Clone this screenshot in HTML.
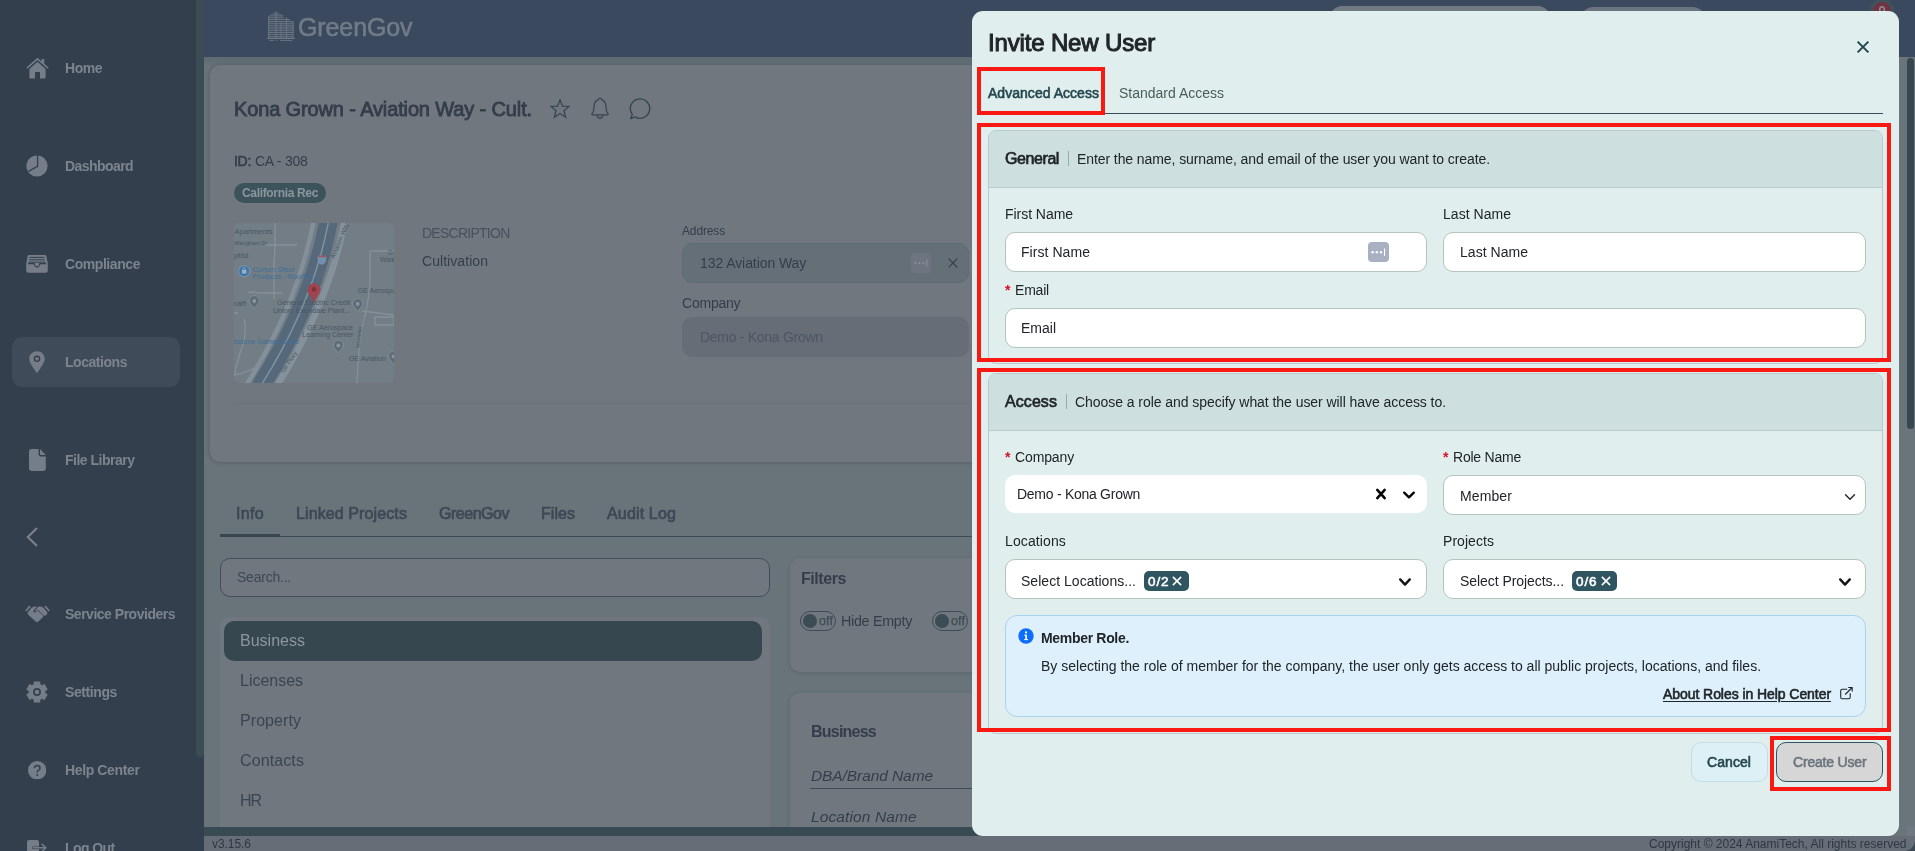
<!DOCTYPE html><html><head><meta charset="utf-8"><title>GreenGov</title><style>
html,body{margin:0;padding:0;}html{width:1915px;height:851px;overflow:hidden;}body{width:1915px;height:851px;overflow:hidden;position:relative;background:#68737a;font-family:"Liberation Sans", sans-serif;}
#w{position:absolute;left:0;top:0;width:1915px;height:851px;overflow:hidden;}#w>div,#w>span,#w>svg{position:absolute;box-sizing:border-box;}span.t{white-space:nowrap;display:block;will-change:transform;}
</style></head><body><div id="w">
<div style="left:0px;top:0px;width:196px;height:851px;background:#343f4d;"></div>
<div style="left:196px;top:0px;width:8px;height:851px;background:#343f4d;"></div>
<div style="left:196px;top:0px;width:8px;height:757px;background:#3b4c54;border-radius:0 0 4px 4px;"></div>
<div style="left:204px;top:57px;width:1711px;height:9px;background:transparent;background:linear-gradient(#5f6971,#68737a);"></div>
<div style="left:204px;top:0px;width:1711px;height:57px;background:#3a495d;"></div>
<div style="left:12px;top:337px;width:168px;height:50px;background:#404b5a;border-radius:10px;"></div>
<svg style="left:25.5px;top:57px;" width="23" height="22" viewBox="0 0 23 22"><path fill="#747d88" d="M11.5 0.8 L15.6 4.4 V2 H18.2 V6.7 L22.6 10.6 L21.6 11.8 L11.5 3 L1.4 11.8 L0.4 10.6 Z"/><path fill="#747d88" d="M11.5 4.8 L19.6 11.9 V20.6 Q19.6 21.6 18.6 21.6 H14 V15 H9 V21.6 H4.4 Q3.4 21.6 3.4 20.6 V11.9 Z"/></svg>
<svg style="left:26px;top:155px;" width="22" height="22" viewBox="0 0 22 22"><circle cx="11" cy="11" r="10.6" fill="#747d88"/><path d="M11.6 0 V11.4 L2.4 16.4" stroke="#343f4d" stroke-width="1.3" fill="none"/></svg>
<svg style="left:26px;top:254px;" width="22" height="20" viewBox="0 0 22 20"><path fill="#747d88" d="M3.2 1 H18.8 Q20 1 20.4 2.2 L21.8 9.5 V16.8 Q21.8 18.8 19.8 18.8 H2.2 Q0.2 18.8 0.2 16.8 V9.5 L1.6 2.2 Q2 1 3.2 1 Z"/><path d="M3.6 3.4 H18.4 M3.2 5.8 H18.8 M2.8 8.2 H19.2" stroke="#343f4d" stroke-width="1" fill="none"/><path d="M2 9.6 H8.2 Q8.8 12.8 11 12.8 Q13.2 12.8 13.8 9.6 H20 " stroke="#343f4d" stroke-width="1.2" fill="none"/><rect x="9" y="9" width="4" height="2.6" fill="#747d88"/></svg>
<svg style="left:29px;top:351px;" width="16" height="22" viewBox="0 0 16 22"><path fill="#747d88" d="M8 0.3 C3.6 0.3 0.3 3.6 0.3 7.8 C0.3 11 2 13.4 7.2 21.2 Q8 22.2 8.8 21.2 C14 13.4 15.7 11 15.7 7.8 C15.7 3.6 12.4 0.3 8 0.3 Z"/><circle cx="8" cy="7.8" r="2.6" fill="none" stroke="#343f4d" stroke-width="1.4"/></svg>
<svg style="left:28.5px;top:449px;" width="17" height="22" viewBox="0 0 17 22"><path fill="#747d88" d="M2.4 0 H9.6 V5.6 Q9.6 7.4 11.4 7.4 H16.8 V19.6 Q16.8 22 14.4 22 H2.4 Q0 22 0 19.6 V2.4 Q0 0 2.4 0 Z M11 0 L16.8 6 H11.6 Q11 6 11 5.4 Z"/></svg>
<svg style="left:26px;top:527px;" width="13" height="20" viewBox="0 0 13 20"><path d="M11 1 L1.8 10 L11 19" stroke="#7b848e" stroke-width="2" fill="none"/></svg>
<svg style="left:24.5px;top:605px;" width="25" height="18" viewBox="0 0 25 18"><path fill="#747d88" d="M4.2 0.6 L5.6 1.8 L1.4 6.6 L0.2 5.4 Z M20.8 0.6 L24.8 5.4 L23.6 6.6 L19.4 1.8 Z"/><path fill="#747d88" d="M6.8 2.6 L9.4 1.4 H12 L8.4 5.8 Q8 7.4 9.4 7.6 Q10.6 7.6 12.4 5.4 L18 10.2 Q18.8 11.4 17.6 12.4 L13.4 16.6 Q12 17.6 10.6 16.6 L3 9.6 L2.6 7.6 Z"/><path fill="#747d88" d="M13.2 1.4 H15.6 L18.2 2.6 L22.4 7.6 L21.8 9.8 L19.4 11 L12.6 4.8 L11.4 6 Q10.2 6.8 9.6 6.2 Z"/></svg>
<svg style="left:26px;top:681px;" width="22" height="22" viewBox="0 0 22 22"><path fill="#747d88" stroke="#747d88" stroke-width="1.4" stroke-linejoin="round" d="M8.36 1.15 L13.64 1.15 L13.52 3.51 L16.22 5.07 L18.21 3.79 L20.85 8.36 L18.74 9.44 L18.74 12.56 L20.85 13.64 L18.21 18.21 L16.22 16.93 L13.52 18.49 L13.64 20.85 L8.36 20.85 L8.48 18.49 L5.78 16.93 L3.79 18.21 L1.15 13.64 L3.26 12.56 L3.26 9.44 L1.15 8.36 L3.79 3.79 L5.78 5.07 L8.48 3.51 Z"/><circle cx="11" cy="11" r="3.1" fill="none" stroke="#343f4d" stroke-width="1.7"/></svg>
<svg style="left:27.8px;top:760.8px;" width="18.4" height="18.4" viewBox="0 0 18.4 18.4"><circle cx="9.2" cy="9.2" r="9.2" fill="#747d88"/><path d="M6.4 7.2 Q6.4 4.4 9.2 4.4 Q12 4.4 12 6.9 Q12 8.4 10.4 9.3 Q9.2 10 9.2 11.6" stroke="#343f4d" stroke-width="1.5" fill="none"/><circle cx="9.2" cy="14" r="1" fill="#343f4d"/></svg>
<svg style="left:27px;top:840px;" width="20" height="11" viewBox="0 0 20 11"><path fill="#747d88" d="M2 0 H10 Q12 0 12 2 V6.6 H5.4 V9 H12 V11 H0 V2 Q0 0 2 0 Z"/><path d="M6 7.8 H18.4 M14.6 3.8 L18.8 7.8 L14.6 11.8" stroke="#747d88" stroke-width="1.5" fill="none"/></svg>
<svg style="left:267px;top:10.5px;" width="28" height="31" viewBox="0 0 28 31"><defs><clipPath id="bA"><path d="M1.4 5.2 L9 0.6 L16.6 4.4 V8.4 L13.4 10 V27 H1.4 Z"/></clipPath><clipPath id="bB"><path d="M13.6 10.2 L19.6 6.4 L26.4 10.4 V27 H13.6 Z"/></clipPath></defs><g clip-path="url(#bA)"><path d="M0 1.2 H30" stroke="#717b88" stroke-width="0.9"/><path d="M0 3.05 H30" stroke="#717b88" stroke-width="0.9"/><path d="M0 4.9 H30" stroke="#717b88" stroke-width="0.9"/><path d="M0 6.750000000000001 H30" stroke="#717b88" stroke-width="0.9"/><path d="M0 8.6 H30" stroke="#717b88" stroke-width="0.9"/><path d="M0 10.45 H30" stroke="#717b88" stroke-width="0.9"/><path d="M0 12.3 H30" stroke="#717b88" stroke-width="0.9"/><path d="M0 14.15 H30" stroke="#717b88" stroke-width="0.9"/><path d="M0 16.0 H30" stroke="#717b88" stroke-width="0.9"/><path d="M0 17.85 H30" stroke="#717b88" stroke-width="0.9"/><path d="M0 19.7 H30" stroke="#717b88" stroke-width="0.9"/><path d="M0 21.55 H30" stroke="#717b88" stroke-width="0.9"/><path d="M0 23.400000000000002 H30" stroke="#717b88" stroke-width="0.9"/><path d="M0 25.25 H30" stroke="#717b88" stroke-width="0.9"/><path d="M0 27.1 H30" stroke="#717b88" stroke-width="0.9"/></g><g clip-path="url(#bB)"><path d="M0 1.2 H30" stroke="#717b88" stroke-width="0.9"/><path d="M0 3.05 H30" stroke="#717b88" stroke-width="0.9"/><path d="M0 4.9 H30" stroke="#717b88" stroke-width="0.9"/><path d="M0 6.750000000000001 H30" stroke="#717b88" stroke-width="0.9"/><path d="M0 8.6 H30" stroke="#717b88" stroke-width="0.9"/><path d="M0 10.45 H30" stroke="#717b88" stroke-width="0.9"/><path d="M0 12.3 H30" stroke="#717b88" stroke-width="0.9"/><path d="M0 14.15 H30" stroke="#717b88" stroke-width="0.9"/><path d="M0 16.0 H30" stroke="#717b88" stroke-width="0.9"/><path d="M0 17.85 H30" stroke="#717b88" stroke-width="0.9"/><path d="M0 19.7 H30" stroke="#717b88" stroke-width="0.9"/><path d="M0 21.55 H30" stroke="#717b88" stroke-width="0.9"/><path d="M0 23.400000000000002 H30" stroke="#717b88" stroke-width="0.9"/><path d="M0 25.25 H30" stroke="#717b88" stroke-width="0.9"/><path d="M0 27.1 H30" stroke="#717b88" stroke-width="0.9"/></g><path d="M1.6 5.2 V27 M9 0.6 V27 M13.8 10.2 V27 M19.6 6.4 V27 M26.2 10.4 V27" stroke="#717b88" stroke-width="0.8" fill="none"/><path d="M0 27.4 H28" stroke="#717b88" stroke-width="1.1"/><path d="M2.4 29.4 H6.8 M8.4 29.4 H9.2 M10.4 29.4 H11 M13 29.4 H25.2" stroke="#717b88" stroke-width="0.9"/></svg>
<div style="left:1330px;top:6px;width:220px;height:40px;background:#717a83;border-radius:12px;"></div>
<div style="left:1581px;top:7px;width:124px;height:38px;background:#6a747e;border-radius:12px;"></div>
<div style="left:1872.6px;top:2.4px;width:18.6px;height:18.6px;background:#70333f;border-radius:50%;box-shadow:0 0 0 3.5px #3e515c;"></div>
<svg style="left:1877px;top:4px;" width="10" height="8" viewBox="0 0 10 8"><ellipse cx="5" cy="5.6" rx="2.3" ry="2.8" fill="none" stroke="#8a8f98" stroke-width="1.5"/></svg>
<div style="left:210px;top:65px;width:790px;height:397px;background:#70777f;border-radius:10px;box-shadow:0 0 5px rgba(0,0,0,.22);"></div>
<div style="left:234px;top:183px;width:92px;height:20px;background:#3d535c;border-radius:10px;"></div>
<div style="left:682px;top:243px;width:287px;height:40px;background:#656f77;border-radius:10px;border:1px solid #5f6a72;"></div>
<div style="left:910.6px;top:253.2px;width:20.4px;height:19.6px;background:#6d7581;border-radius:4px;"></div>
<svg style="left:910.6px;top:253.2px;" width="20.4" height="19.6" viewBox="0 0 20.4 19.6"><circle cx="4.4" cy="10" r="1.1" fill="#87919c"/><circle cx="8.4" cy="10" r="1.1" fill="#87919c"/><circle cx="12.4" cy="10" r="1.1" fill="#87919c"/><rect x="15.4" y="6.4" width="1" height="7.2" fill="#87919c"/></svg>
<svg style="left:947.8px;top:258.1px;" width="10" height="10" viewBox="0 0 10 10"><path d="M0.7 0.7 L9.3 9.3 M9.3 0.7 L0.7 9.3" stroke="#343e4b" stroke-width="1.2" fill="none"/></svg>
<div style="left:682px;top:317px;width:287px;height:40px;background:#676d77;border-radius:10px;"></div>
<div style="left:234px;top:403px;width:766px;height:1px;background:#69727a;"></div>
<svg style="left:550px;top:98.6px;" width="20" height="20" viewBox="0 0 20 20"><path d="M10.00 0.80 L12.41 7.08 L19.13 7.43 L13.90 11.67 L15.64 18.17 L10.00 14.50 L4.36 18.17 L6.10 11.67 L0.87 7.43 L7.59 7.08 Z" stroke="#37474f" stroke-width="1.3" fill="none" stroke-linejoin="miter"/></svg>
<svg style="left:590px;top:97px;" width="20" height="23" viewBox="0 0 20 23"><path d="M10 1.2 Q11.4 1.2 11.6 2.6 Q16 4 16 10 Q16 14.4 18 16.6 Q18.6 17.6 17.6 17.8 H2.4 Q1.4 17.6 2 16.6 Q4 14.4 4 10 Q4 4 8.4 2.6 Q8.6 1.2 10 1.2 Z" stroke="#37474f" stroke-width="1.3" fill="none"/><path d="M7.2 18.4 Q7.6 21.2 10 21.2 Q12.4 21.2 12.8 18.4" stroke="#37474f" stroke-width="1.3" fill="none"/></svg>
<svg style="left:628px;top:97px;" width="24" height="24" viewBox="0 0 24 24"><path d="M11.7 1.9 A9.7 9.7 0 1 1 7 19.9 L2.6 21.6 L4.3 17.4 A9.7 9.7 0 0 1 11.7 1.9 Z" stroke="#37474f" stroke-width="1.4" fill="none" stroke-linejoin="round"/></svg>
<svg style="left:234px;top:223px;" width="160" height="160" viewBox="0 0 160 160"><defs><clipPath id="mc"><rect x="0" y="0" width="160" height="160" rx="5"/></clipPath></defs><g clip-path="url(#mc)" font-family="Liberation Sans, sans-serif"><rect width="160" height="160" fill="#727d86"/><g stroke="#84919a" stroke-width="1.3" fill="none"><path d="M31 22 H63 M41 0 V20 Q41 30 40 40 V76 M14 70 Q18 68 24 70 H48 M0 90 H4 M10 96 Q14 110 6 130 Q2 145 0 152 M136 28 H160 M136 28 V60 Q134 84 128 104 Q124 130 123 160 M128 88 L160 92 M141 94 H160 V102 H141 Z M22 144 Q12 150 0 152"/></g><path d="M80 -4 Q65 79 11 164" stroke="#838f99" stroke-width="4.5" fill="none"/><path d="M111 -4 Q96 79 42 164" stroke="#85929c" stroke-width="6.5" fill="none"/><path d="M95 -4 Q80 79 26 164" stroke="#55697b" stroke-width="18.5" fill="none"/><path d="M95 -4 Q80 79 26 164" stroke="#8294a3" stroke-width="1.4" fill="none"/><text x="0.6" y="10.5" font-size="7.6" fill="#4a5863" textLength="38" lengthAdjust="spacingAndGlyphs">Apartments</text><text x="0.6" y="21.5" font-size="5.8" fill="#4a5863" textLength="33" lengthAdjust="spacingAndGlyphs">Mangham Dr</text><text x="0" y="35" font-size="6.6" fill="#4a5863" textLength="14.4" lengthAdjust="spacingAndGlyphs">ptist</text><text x="18.6" y="48.5" font-size="7.6" fill="#416f99" textLength="41.4" lengthAdjust="spacingAndGlyphs">Corken Steel</text><text x="18.6" y="56" font-size="7.6" fill="#416f99" textLength="60.3" lengthAdjust="spacingAndGlyphs">Products - Roofing</text><text x="0" y="82.5" font-size="7.2" fill="#4a5863" textLength="12.3" lengthAdjust="spacingAndGlyphs">raft</text><text x="43" y="82" font-size="7" fill="#4a5863" textLength="73.3" lengthAdjust="spacingAndGlyphs">General Electric Credit</text><text x="39" y="89.8" font-size="7" fill="#4a5863" textLength="77.3" lengthAdjust="spacingAndGlyphs">Union: Evendale Plant...</text><text x="123.7" y="69.8" font-size="7.4" fill="#4a5863" textLength="46" lengthAdjust="spacingAndGlyphs">GE Aerospace</text><text x="73" y="106.8" font-size="7.4" fill="#4a5863" textLength="46" lengthAdjust="spacingAndGlyphs">GE Aerospace</text><text x="68.3" y="114.2" font-size="7.4" fill="#4a5863" textLength="51.2" lengthAdjust="spacingAndGlyphs">Learning Center</text><text x="0" y="120.5" font-size="7.4" fill="#416f99" textLength="65" lengthAdjust="spacingAndGlyphs">bstone Games Store</text><text x="114.8" y="138" font-size="7.2" fill="#4a5863" textLength="37.1" lengthAdjust="spacingAndGlyphs">GE Aviation</text><text x="154" y="31.5" font-size="7.2" fill="#4a5863" textLength="5" lengthAdjust="spacingAndGlyphs">G</text><text x="146" y="38.5" font-size="7.2" fill="#4a5863" textLength="15" lengthAdjust="spacingAndGlyphs">Wek</text><text x="100.5" y="36" font-size="6.4" fill="#4a5863" textLength="38" lengthAdjust="spacingAndGlyphs" transform="rotate(-68 100.5 36)">Aviation Way</text><text x="50" y="150" font-size="6.4" fill="#4a5863" textLength="24" lengthAdjust="spacingAndGlyphs" transform="rotate(-56 50 150)">Ge Pkwy</text><text x="125.5" y="125" font-size="4.6" fill="#4a5863" textLength="22" lengthAdjust="spacingAndGlyphs" transform="rotate(-84 125.5 125)">Mosteller</text><circle cx="10.2" cy="48.2" r="5.6" fill="#3f74a8" stroke="#8da0b0" stroke-width="0.8"/><rect x="8" y="47" width="4.4" height="3.6" fill="#9ab0c4"/><path d="M8.8 47 Q8.8 44.6 10.2 44.6 Q11.6 44.6 11.6 47" stroke="#9ab0c4" stroke-width="0.8" fill="none"/><path d="M20.3 85.5 L16.7 81.1 A5 5 0 1 1 23.900000000000002 81.1 Z" fill="#5d6c77" stroke="#8894a0" stroke-width="0.8"/><circle cx="20.3" cy="77.9" r="1.9" fill="#8a97a0"/><path d="M123.7 88.5 L120.10000000000001 84.1 A5 5 0 1 1 127.3 84.1 Z" fill="#5d6c77" stroke="#8894a0" stroke-width="0.8"/><circle cx="123.7" cy="80.9" r="1.9" fill="#8a97a0"/><path d="M104.3 130 L100.7 125.6 A5 5 0 1 1 107.89999999999999 125.6 Z" fill="#5d6c77" stroke="#8894a0" stroke-width="0.8"/><circle cx="104.3" cy="122.4" r="1.9" fill="#8a97a0"/><path d="M159.5 141 L155.9 136.6 A5 5 0 1 1 163.1 136.6 Z" fill="#5d6c77" stroke="#8894a0" stroke-width="0.8"/><circle cx="159.5" cy="133.4" r="1.9" fill="#8a97a0"/><path d="M84 33 H91.6 V37 Q91.6 40.4 87.8 41.6 Q84 40.4 84 37 Z" fill="#6f8fb0" stroke="#8da0b0" stroke-width="0.5"/><rect x="84" y="32.6" width="7.6" height="1.6" fill="#a0555e"/><path d="M80 80.6 C78 73 73.5 71.2 73.5 66.8 A6.5 6.5 0 1 1 86.5 66.8 C86.5 71.2 82 73 80 80.6 Z" fill="#a0444e"/><circle cx="80" cy="66.4" r="2.3" fill="#7a323b"/></g></svg>
<div style="left:220px;top:536px;width:780px;height:1px;background:#3d4a5a;"></div>
<div style="left:220px;top:534px;width:60px;height:3px;background:#394650;"></div>
<div style="left:220px;top:557.5px;width:550px;height:39.5px;background:#70777f;border-radius:10px;border:1px solid #414d5a;"></div>
<div style="left:220px;top:617px;width:550px;height:215px;background:#70777f;border-radius:10px 10px 0 0;"></div>
<div style="left:224px;top:621px;width:538px;height:40px;background:#37474f;border-radius:10px;"></div>
<div style="left:790px;top:557.5px;width:220px;height:114px;background:#70777f;border-radius:10px;box-shadow:0 1px 4px rgba(0,0,0,.12);"></div>
<div style="left:800px;top:611px;width:36px;height:20px;background:transparent;border-radius:10px;border:1px solid #3b4c54;"></div>
<div style="left:803px;top:614px;width:14px;height:14px;background:#3b4c54;border-radius:50%;"></div>
<div style="left:932px;top:611px;width:36px;height:20px;background:transparent;border-radius:10px;border:1px solid #3b4c54;"></div>
<div style="left:935px;top:614px;width:14px;height:14px;background:#3b4c54;border-radius:50%;"></div>
<div style="left:790px;top:692.5px;width:220px;height:140px;background:#70777f;border-radius:9px 9px 0 0;box-shadow:0 1px 4px rgba(0,0,0,.12);"></div>
<div style="left:810px;top:788px;width:190px;height:1px;background:#3b4c54;"></div>
<div style="left:204px;top:826.5px;width:796px;height:9.5px;background:#384a52;"></div>
<div style="left:204px;top:836px;width:1711px;height:15px;background:#3a4953;"></div>
<div style="left:204px;top:836px;width:1711px;height:15px;background:#676d76;border-radius:0 0 11px 0;"></div>
<div style="left:1899px;top:57px;width:16px;height:779px;background:#6a747b;"></div>
<div style="left:1907px;top:57.5px;width:7.2px;height:371px;background:#37474f;border-radius:4px;"></div>
<div style="left:1907px;top:826px;width:8px;height:10px;background:#6f7780;"></div>
<div style="left:972px;top:11px;width:927px;height:825px;background:#e0eeed;border-radius:11px;"></div>
<div style="left:988px;top:113px;width:895px;height:1px;background:#3a4a5e;"></div>
<svg style="left:1856px;top:40px;" width="14" height="14" viewBox="0 0 14 14"><path d="M1.6 1.6 L12.4 12.4 M12.4 1.6 L1.6 12.4" stroke="#24474f" stroke-width="2" fill="none"/></svg>
<div style="left:988px;top:130px;width:895px;height:234px;background:transparent;border-radius:8px;border:1px solid #b9c9cd;"></div>
<div style="left:989px;top:131px;width:893px;height:57px;background:#cddfde;border-radius:7px 7px 0 0;border-bottom:1px solid #b9c9cd;"></div>
<div style="left:1067.5px;top:151px;width:1px;height:15px;background:#9aa9ad;"></div>
<div style="left:1005px;top:232px;width:422px;height:39.5px;background:#fff;border-radius:10px;border:1px solid #b4c4bc;"></div>
<div style="left:1443px;top:232px;width:423px;height:39.5px;background:#fff;border-radius:10px;border:1px solid #b4c4bc;"></div>
<div style="left:1368px;top:242px;width:21px;height:20px;background:#a9b0c2;border-radius:4px;"></div>
<svg style="left:1368px;top:242px;" width="21" height="20" viewBox="0 0 21 20"><circle cx="4.6" cy="10.2" r="1.2" fill="#fff"/><circle cx="8.8" cy="10.2" r="1.2" fill="#fff"/><circle cx="13" cy="10.2" r="1.2" fill="#fff"/><rect x="16" y="6.5" width="1.1" height="7.4" fill="#fff"/></svg>
<div style="left:1005px;top:308px;width:861px;height:40px;background:#fff;border-radius:10px;border:1px solid #b4c4bc;"></div>
<div style="left:988px;top:373px;width:895px;height:360.5px;background:transparent;border-radius:8px;border:1px solid #b9c9cd;"></div>
<div style="left:989px;top:374px;width:893px;height:57px;background:#cddfde;border-radius:7px 7px 0 0;border-bottom:1px solid #b9c9cd;"></div>
<div style="left:1065.5px;top:394px;width:1px;height:15px;background:#9aa9ad;"></div>
<div style="left:1005px;top:475px;width:422px;height:38px;background:#fff;border-radius:10px;"></div>
<div style="left:1443px;top:475px;width:423px;height:39.7px;background:#fff;border-radius:10px;border:1px solid #b4c4bc;"></div>
<div style="left:1005px;top:559px;width:422px;height:40px;background:#fff;border-radius:10px;border:1px solid #b4c4bc;"></div>
<div style="left:1443px;top:559px;width:423px;height:40px;background:#fff;border-radius:10px;border:1px solid #b4c4bc;"></div>
<div style="left:1144px;top:571px;width:45px;height:20px;background:#2f5560;border-radius:5px;"></div>
<div style="left:1572px;top:571px;width:45px;height:20px;background:#2f5560;border-radius:5px;"></div>
<svg style="left:1371px;top:484px" width="20" height="20" viewBox="-10 -10 20 20"><path d="M-3.7 -4.1 L3.7 4.1 M3.7 -4.1 L-3.7 4.1" stroke="#050505" stroke-width="2.6" fill="none" stroke-linecap="round"/></svg>
<svg style="left:1399px;top:485px" width="20" height="20" viewBox="-10 -10 20 20"><path d="M-4.8 -2.35 L0 2.35 L4.8 -2.35" stroke="#050505" stroke-width="2.4" fill="none" stroke-linecap="round" stroke-linejoin="round"/></svg>
<svg style="left:1840px;top:486.5px" width="20" height="20" viewBox="-10 -10 20 20"><path d="M-4.5 -2.25 L0 2.25 L4.5 -2.25" stroke="#212529" stroke-width="1.4" fill="none" stroke-linecap="round" stroke-linejoin="round"/></svg>
<svg style="left:1395px;top:571.6px" width="20" height="20" viewBox="-10 -10 20 20"><path d="M-4.8 -2.6 L0 2.6 L4.8 -2.6" stroke="#141414" stroke-width="2.4" fill="none" stroke-linecap="round" stroke-linejoin="round"/></svg>
<svg style="left:1835px;top:571.6px" width="20" height="20" viewBox="-10 -10 20 20"><path d="M-4.8 -2.6 L0 2.6 L4.8 -2.6" stroke="#141414" stroke-width="2.4" fill="none" stroke-linecap="round" stroke-linejoin="round"/></svg>
<svg style="left:1167px;top:571px" width="20" height="20" viewBox="-10 -10 20 20"><path d="M-4.1 -4.1 L4.1 4.1 M4.1 -4.1 L-4.1 4.1" stroke="#fff" stroke-width="1.6" fill="none" stroke-linecap="butt"/></svg>
<svg style="left:1596px;top:571px" width="20" height="20" viewBox="-10 -10 20 20"><path d="M-4.1 -4.1 L4.1 4.1 M4.1 -4.1 L-4.1 4.1" stroke="#fff" stroke-width="1.6" fill="none" stroke-linecap="butt"/></svg>
<div style="left:1005px;top:615px;width:861px;height:102px;background:#ddf0fc;border-radius:12px;border:1px solid #a9d3f3;"></div>
<svg style="left:1018px;top:628px;" width="16" height="16" viewBox="0 0 16 16"><circle cx="8" cy="8" r="7.7" fill="#0d6efd"/><rect x="7.3" y="6.7" width="1.6" height="5.2" fill="#fff"/><rect x="6.3" y="6.7" width="2" height="1" fill="#fff"/><rect x="6.2" y="11.1" width="3.8" height="1" fill="#fff"/><circle cx="8" cy="4.4" r="1.05" fill="#fff"/></svg>
<svg style="left:1839px;top:686px;" width="15" height="15" viewBox="0 0 15 15"><g fill="none" stroke="#212529" stroke-width="1.1"><path d="M8.2 3.3 H3.2 Q1.7 3.3 1.7 4.8 V11.3 Q1.7 12.8 3.2 12.8 H9.7 Q11.2 12.8 11.2 11.3 V7.3"/><path d="M6.2 8.5 L13.2 1.5 M9.2 1.5 H13.2 V5.5"/></g></svg>
<div style="left:1691px;top:742px;width:77px;height:40px;background:#dcf0f5;border-radius:10px;border:1px solid #c3dde4;"></div>
<div style="left:1776px;top:742px;width:107px;height:40px;background:#d6d6d6;border-radius:10px;border:1px solid #2f5560;"></div>
<div style="left:977px;top:67px;width:128px;height:48px;background:transparent;border:4px solid #fa1812;"></div>
<div style="left:977px;top:123px;width:914px;height:239px;background:transparent;border:4px solid #fa1812;"></div>
<div style="left:977px;top:368px;width:914px;height:364px;background:transparent;border:4px solid #fa1812;"></div>
<div style="left:1770px;top:736px;width:121px;height:55px;background:transparent;border:4px solid #fa1812;"></div>
<span class="t" style="left:65px;top:58.0px;font-size:14px;font-weight:700;color:#7b848e;line-height:20px;letter-spacing:-0.452px;">Home</span>
<span class="t" style="left:65px;top:156.0px;font-size:14px;font-weight:700;color:#7b848e;line-height:20px;letter-spacing:-0.569px;">Dashboard</span>
<span class="t" style="left:65px;top:254.0px;font-size:14px;font-weight:700;color:#7b848e;line-height:20px;letter-spacing:-0.436px;">Compliance</span>
<span class="t" style="left:65px;top:352.0px;font-size:14px;font-weight:700;color:#7b848e;line-height:20px;letter-spacing:-0.458px;">Locations</span>
<span class="t" style="left:65px;top:450.0px;font-size:14px;font-weight:700;color:#7b848e;line-height:20px;letter-spacing:-0.497px;">File Library</span>
<span class="t" style="left:65px;top:604.0px;font-size:14px;font-weight:700;color:#7b848e;line-height:20px;letter-spacing:-0.488px;">Service Providers</span>
<span class="t" style="left:65px;top:682.0px;font-size:14px;font-weight:700;color:#7b848e;line-height:20px;letter-spacing:-0.404px;">Settings</span>
<span class="t" style="left:65px;top:760.0px;font-size:14px;font-weight:700;color:#7b848e;line-height:20px;letter-spacing:-0.371px;">Help Center</span>
<span class="t" style="left:65px;top:838.0px;font-size:14px;font-weight:700;color:#7b848e;line-height:20px;letter-spacing:-0.594px;">Log Out</span>
<span class="t" style="left:298px;top:9.7px;font-size:25px;font-weight:400;color:#717b88;line-height:35px;letter-spacing:-0.105px;-webkit-text-stroke:0.6px #717b88;">GreenGov</span>
<span class="t" style="left:234px;top:95.0px;font-size:20px;font-weight:400;color:#343e4b;line-height:28px;letter-spacing:-0.132px;-webkit-text-stroke:0.84px #343e4b;">Kona Grown - Aviation Way - Cult.</span>
<span class="t" style="left:234px;top:151.0px;font-size:14px;font-weight:400;color:#343e4b;line-height:20px;letter-spacing:-0.297px;-webkit-text-stroke:0.59px #343e4b;">ID:</span>
<span class="t" style="left:255px;top:151.0px;font-size:14px;font-weight:400;color:#343e4b;line-height:20px;letter-spacing:-0.248px;">CA - 308</span>
<span class="t" style="left:242px;top:184.5px;font-size:12px;font-weight:700;color:#8a979d;line-height:17px;letter-spacing:-0.336px;">California Rec</span>
<span class="t" style="left:422px;top:223.0px;font-size:14px;font-weight:400;color:#47525e;line-height:20px;letter-spacing:-0.744px;">DESCRIPTION</span>
<span class="t" style="left:422px;top:251.0px;font-size:14px;font-weight:400;color:#343e4b;line-height:20px;letter-spacing:0.057px;">Cultivation</span>
<span class="t" style="left:682.3px;top:222.5px;font-size:12px;font-weight:400;color:#343e4b;line-height:17px;letter-spacing:-0.147px;">Address</span>
<span class="t" style="left:699.8px;top:253.0px;font-size:14px;font-weight:400;color:#343e4b;line-height:20px;letter-spacing:-0.075px;">132 Aviation Way</span>
<span class="t" style="left:682.3px;top:293.0px;font-size:14px;font-weight:400;color:#343e4b;line-height:20px;letter-spacing:-0.217px;">Company</span>
<span class="t" style="left:699.5px;top:327.2px;font-size:14px;font-weight:400;color:#4c5763;line-height:20px;letter-spacing:-0.289px;">Demo - Kona Grown</span>
<span class="t" style="left:236px;top:502.5px;font-size:16px;font-weight:400;color:#3d4856;line-height:22px;letter-spacing:0.328px;-webkit-text-stroke:0.67px #3d4856;">Info</span>
<span class="t" style="left:296px;top:502.5px;font-size:16px;font-weight:400;color:#3d4856;line-height:22px;letter-spacing:0.107px;-webkit-text-stroke:0.67px #3d4856;">Linked Projects</span>
<span class="t" style="left:439px;top:502.5px;font-size:16px;font-weight:400;color:#3d4856;line-height:22px;letter-spacing:-0.477px;-webkit-text-stroke:0.67px #3d4856;">GreenGov</span>
<span class="t" style="left:541px;top:502.5px;font-size:16px;font-weight:400;color:#3d4856;line-height:22px;letter-spacing:0.044px;-webkit-text-stroke:0.67px #3d4856;">Files</span>
<span class="t" style="left:607px;top:502.5px;font-size:16px;font-weight:400;color:#3d4856;line-height:22px;letter-spacing:0.155px;-webkit-text-stroke:0.67px #3d4856;">Audit Log</span>
<span class="t" style="left:237px;top:567.0px;font-size:14px;font-weight:400;color:#3d4856;line-height:20px;letter-spacing:-0.226px;">Search...</span>
<span class="t" style="left:240px;top:629.5px;font-size:16px;font-weight:400;color:#8c979d;line-height:22px;letter-spacing:0.010px;">Business</span>
<span class="t" style="left:240px;top:669.5px;font-size:16px;font-weight:400;color:#3a4552;line-height:22px;letter-spacing:-0.020px;">Licenses</span>
<span class="t" style="left:240px;top:709.5px;font-size:16px;font-weight:400;color:#3a4552;line-height:22px;letter-spacing:0.066px;">Property</span>
<span class="t" style="left:240px;top:749.5px;font-size:16px;font-weight:400;color:#3a4552;line-height:22px;letter-spacing:0.107px;">Contacts</span>
<span class="t" style="left:240px;top:789.5px;font-size:16px;font-weight:400;color:#3a4552;line-height:22px;letter-spacing:-1.055px;">HR</span>
<span class="t" style="left:800.6px;top:567.5px;font-size:16px;font-weight:700;color:#343e4b;line-height:22px;letter-spacing:-0.431px;">Filters</span>
<span class="t" style="left:818.7px;top:611.6px;font-size:12.5px;font-weight:400;color:#3b4c54;line-height:18px;letter-spacing:0.109px;-webkit-text-stroke:0.25px #3b4c54;">off</span>
<span class="t" style="left:950.7px;top:611.6px;font-size:12.5px;font-weight:400;color:#3b4c54;line-height:18px;letter-spacing:0.109px;-webkit-text-stroke:0.25px #3b4c54;">off</span>
<span class="t" style="left:840.6px;top:611.0px;font-size:14.3px;font-weight:400;color:#343e4b;line-height:20px;letter-spacing:-0.291px;">Hide Empty</span>
<span class="t" style="left:810.6px;top:721.0px;font-size:16px;font-weight:700;color:#343e4b;line-height:22px;letter-spacing:-0.768px;">Business</span>
<span class="t" style="left:810.6px;top:765.2px;font-size:15.5px;font-weight:400;color:#343e4b;line-height:22px;letter-spacing:-0.086px;font-style:italic;">DBA/Brand Name</span>
<span class="t" style="left:810.6px;top:806.2px;font-size:15.5px;font-weight:400;color:#343e4b;line-height:22px;letter-spacing:0.110px;font-style:italic;">Location Name</span>
<span class="t" style="left:212px;top:835.5px;font-size:12px;font-weight:400;color:#2d3843;line-height:17px;letter-spacing:-0.054px;">v3.15.6</span>
<span class="t" style="left:1649px;top:835.5px;font-size:12px;font-weight:400;color:#2d3843;line-height:17px;letter-spacing:-0.003px;">Copyright © 2024 AnamiTech, All rights reserved</span>
<span class="t" style="left:988px;top:26.0px;font-size:24px;font-weight:400;color:#212529;line-height:34px;letter-spacing:-0.159px;-webkit-text-stroke:1.01px #212529;">Invite New User</span>
<span class="t" style="left:988px;top:83.0px;font-size:14px;font-weight:400;color:#24474f;line-height:20px;letter-spacing:0.032px;-webkit-text-stroke:0.59px #24474f;">Advanced Access</span>
<span class="t" style="left:1119px;top:83.0px;font-size:14px;font-weight:400;color:#4a5e58;line-height:20px;letter-spacing:-0.004px;">Standard Access</span>
<span class="t" style="left:1005px;top:148.4px;font-size:16px;font-weight:400;color:#212529;line-height:22px;letter-spacing:-0.417px;-webkit-text-stroke:0.67px #212529;">General</span>
<span class="t" style="left:1077px;top:149.0px;font-size:14px;font-weight:400;color:#212529;line-height:20px;letter-spacing:-0.086px;">Enter the name, surname, and email of the user you want to create.</span>
<span class="t" style="left:1005px;top:204.0px;font-size:14px;font-weight:400;color:#212529;line-height:20px;letter-spacing:-0.045px;">First Name</span>
<span class="t" style="left:1443px;top:204.0px;font-size:14px;font-weight:400;color:#212529;line-height:20px;letter-spacing:0.033px;">Last Name</span>
<span class="t" style="left:1021px;top:242.0px;font-size:14px;font-weight:400;color:#212529;line-height:20px;letter-spacing:0.055px;">First Name</span>
<span class="t" style="left:1460px;top:242.0px;font-size:14px;font-weight:400;color:#212529;line-height:20px;letter-spacing:0.033px;">Last Name</span>
<span class="t" style="left:1004.5px;top:280.0px;font-size:14px;font-weight:700;color:#dc1027;line-height:20px;letter-spacing:0.547px;">*</span>
<span class="t" style="left:1015px;top:280.0px;font-size:14px;font-weight:400;color:#212529;line-height:20px;letter-spacing:-0.203px;">Email</span>
<span class="t" style="left:1021px;top:318.0px;font-size:14px;font-weight:400;color:#212529;line-height:20px;letter-spacing:-0.003px;">Email</span>
<span class="t" style="left:1005px;top:391.4px;font-size:16px;font-weight:400;color:#212529;line-height:22px;letter-spacing:0.070px;-webkit-text-stroke:0.67px #212529;">Access</span>
<span class="t" style="left:1075px;top:392.0px;font-size:14px;font-weight:400;color:#212529;line-height:20px;letter-spacing:-0.055px;">Choose a role and specify what the user will have access to.</span>
<span class="t" style="left:1004.5px;top:447.0px;font-size:14px;font-weight:700;color:#dc1027;line-height:20px;letter-spacing:0.547px;">*</span>
<span class="t" style="left:1015px;top:447.0px;font-size:14px;font-weight:400;color:#212529;line-height:20px;letter-spacing:-0.132px;">Company</span>
<span class="t" style="left:1442.5px;top:447.0px;font-size:14px;font-weight:700;color:#dc1027;line-height:20px;letter-spacing:0.547px;">*</span>
<span class="t" style="left:1453px;top:447.0px;font-size:14px;font-weight:400;color:#212529;line-height:20px;letter-spacing:-0.226px;">Role Name</span>
<span class="t" style="left:1017px;top:484.0px;font-size:14px;font-weight:400;color:#212529;line-height:20px;letter-spacing:-0.271px;">Demo - Kona Grown</span>
<span class="t" style="left:1460px;top:486.0px;font-size:14px;font-weight:400;color:#212529;line-height:20px;letter-spacing:0.107px;">Member</span>
<span class="t" style="left:1005px;top:531.0px;font-size:14px;font-weight:400;color:#212529;line-height:20px;letter-spacing:0.118px;">Locations</span>
<span class="t" style="left:1443px;top:531.0px;font-size:14px;font-weight:400;color:#212529;line-height:20px;letter-spacing:0.053px;">Projects</span>
<span class="t" style="left:1021px;top:571.0px;font-size:14px;font-weight:400;color:#212529;line-height:20px;letter-spacing:0.031px;">Select Locations...</span>
<span class="t" style="left:1460px;top:571.0px;font-size:14px;font-weight:400;color:#212529;line-height:20px;letter-spacing:-0.058px;">Select Projects...</span>
<span class="t" style="left:1148px;top:571.5px;font-size:13.5px;font-weight:400;color:#fff;line-height:19px;letter-spacing:0.906px;-webkit-text-stroke:0.57px #fff;">0/2</span>
<span class="t" style="left:1576px;top:571.5px;font-size:13.5px;font-weight:400;color:#fff;line-height:19px;letter-spacing:0.906px;-webkit-text-stroke:0.57px #fff;">0/6</span>
<span class="t" style="left:1041px;top:628.0px;font-size:14px;font-weight:700;color:#212529;line-height:20px;letter-spacing:-0.318px;">Member Role.</span>
<span class="t" style="left:1041px;top:656.0px;font-size:14px;font-weight:400;color:#212529;line-height:20px;letter-spacing:0.004px;">By selecting the role of member for the company, the user only gets access to all public projects, locations, and files.</span>
<span class="t" style="left:1663px;top:684.0px;font-size:14px;font-weight:400;color:#212529;line-height:20px;letter-spacing:-0.064px;-webkit-text-stroke:0.59px #212529;text-decoration:underline;text-underline-offset:2px;">About Roles in Help Center</span>
<span class="t" style="left:1707px;top:752.0px;font-size:14px;font-weight:400;color:#24474f;line-height:20px;letter-spacing:0.068px;-webkit-text-stroke:0.59px #24474f;">Cancel</span>
<span class="t" style="left:1792.8px;top:752.0px;font-size:14px;font-weight:400;color:#6c757d;line-height:20px;letter-spacing:-0.188px;-webkit-text-stroke:0.59px #6c757d;">Create User</span>
</div></body></html>
